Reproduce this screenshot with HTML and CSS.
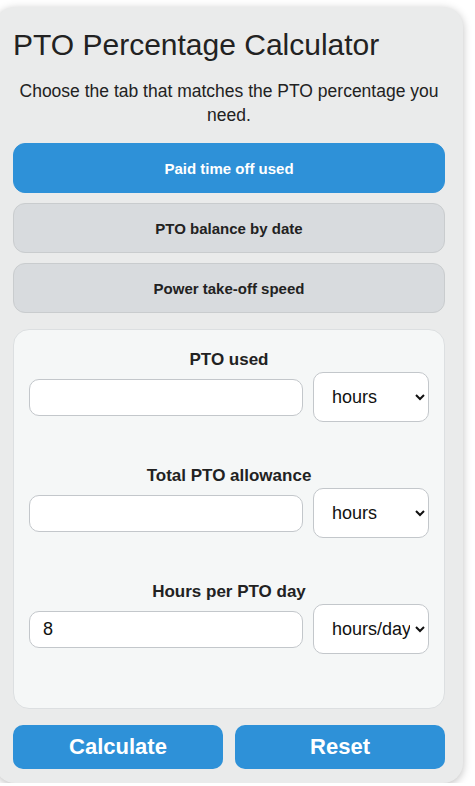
FILE: index.html
```html
<!DOCTYPE html>
<html lang="en">
<head>
    <meta charset="UTF-8">
    <title>PTO Percentage Calculator</title>
    <link rel="stylesheet" href="styles.css">
</head>
<body>
    <div class="calculator">
        <h1>PTO Percentage Calculator</h1>
        <p class="intro">Choose the tab that matches the PTO percentage you need.</p>

        <!-- Tabs -->
        <div class="tabs">
            <button class="tab active">Paid time off used</button>
            <button class="tab">PTO balance by date</button>
            <button class="tab">Power take-off speed</button>
        </div>

        <!-- Inputs -->
        <div class="panel">
            <div class="field">
                <label for="pto-used">PTO used</label>
                <div class="row">
                    <input type="text" id="pto-used">
                    <select>
                        <option>hours</option>
                        <option>days</option>
                    </select>
                </div>
            </div>
            <div class="field">
                <label for="pto-total">Total PTO allowance</label>
                <div class="row">
                    <input type="text" id="pto-total">
                    <select>
                        <option>hours</option>
                        <option>days</option>
                    </select>
                </div>
            </div>
            <div class="field">
                <label for="hours-day">Hours per PTO day</label>
                <div class="row">
                    <input type="text" id="hours-day" value="8">
                    <select>
                        <option>hours/day</option>
                    </select>
                </div>
            </div>
        </div>

        <div class="actions">
            <button class="button">Calculate</button>
            <button class="button">Reset</button>
        </div>
    </div>
</body>
</html>
```

FILE: styles.css
```css
/* General Styles */
body {
    font-family: "Liberation Sans", Arial, sans-serif;
    background-color: #ffffff;
    margin: 0;
    padding: 0;
    color: #222222;
}

.calculator {
    width: 432px;
    margin: 7px 0 0 -5px;
    padding: 20px 18px 14px 18px;
    background-color: #eaebeb;
    border-radius: 20px;
    box-shadow: 0 2px 8px rgba(0, 0, 0, 0.25);
}

h1 {
    font-size: 30px;
    font-weight: normal;
    line-height: 36px;
    margin: 0 0 16px 0;
    color: #222222;
}

.intro {
    font-size: 17.5px;
    line-height: 24px;
    text-align: center;
    margin: 0 0 16px 0;
}

/* Tabs */
.tabs {
    display: flex;
    flex-direction: column;
    gap: 10px;
    margin-bottom: 16px;
}

.tab {
    height: 50px;
    border: 1px solid #c9ccce;
    border-radius: 12px;
    background-color: #d8dbde;
    color: #222222;
    font-family: inherit;
    font-size: 15px;
    font-weight: bold;
    cursor: pointer;
}

.tab.active {
    background-color: #2e91d8;
    border-color: #2e91d8;
    color: #ffffff;
}

/* Input Panel */
.panel {
    background-color: #f5f7f7;
    border: 1px solid #dcdfe1;
    border-radius: 16px;
    padding: 20px 15px 10px 15px;
    margin-bottom: 16px;
}

.field {
    margin-bottom: 44px;
}

.field label {
    display: block;
    text-align: center;
    font-size: 17px;
    font-weight: bold;
    line-height: 20px;
    margin-bottom: 2px;
}

.row {
    display: flex;
    align-items: center;
    gap: 10px;
    height: 50px;
}

.row input {
    flex: 1;
    min-width: 0;
    height: 37px;
    box-sizing: border-box;
    border: 1px solid #c3c7cb;
    border-radius: 10px;
    padding: 0 13px;
    font-family: inherit;
    font-size: 18px;
    color: #111111;
    background-color: #ffffff;
}

.row select {
    width: 116px;
    height: 50px;
    box-sizing: border-box;
    border: 1px solid #c3c7cb;
    border-radius: 10px;
    padding: 0 2px 0 14px;
    font-family: inherit;
    font-size: 18px;
    color: #111111;
    background-color: #ffffff;
}

/* Buttons */
.actions {
    display: flex;
    gap: 12px;
}

.button {
    flex: 1;
    height: 44px;
    border: none;
    border-radius: 10px;
    background-color: #2e91d8;
    color: #ffffff;
    font-family: inherit;
    font-size: 22px;
    font-weight: bold;
    cursor: pointer;
}
```
